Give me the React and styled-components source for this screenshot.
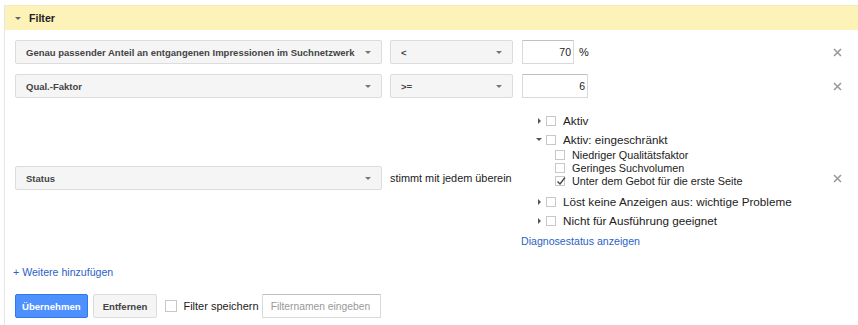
import React from "react";
import styled, { createGlobalStyle } from "styled-components";

const GlobalStyle = createGlobalStyle`
  * { box-sizing: border-box; }
  body {
    margin: 0;
    background: #fff;
    font-family: "Liberation Sans", Arial, sans-serif;
    color: #222;
  }
`;

const Panel = styled.div`
  margin: 5px 0 0 4px;
  border-left: 1px solid #e6e6e6;
  height: 320px;
`;

const Header = styled.div`
  height: 25px;
  background: #fdf3b8;
  border-top: 1px solid #f7ebbd;
  display: flex;
  align-items: center;
  gap: 8px;
  padding-left: 10px;
  font-size: 10.6px;
  font-weight: bold;
  color: #222;
`;

const Triangle = styled.span`
  width: 0;
  height: 0;
  flex: none;
  ${(p) =>
    p.$dir === "right"
      ? `border-top: 3px solid transparent; border-bottom: 3px solid transparent; border-left: 3px solid ${p.$color || "#555"};`
      : `border-left: 3px solid transparent; border-right: 3px solid transparent; border-top: 3px solid ${p.$color || "#555"};`}
`;

const Content = styled.div`
  padding: 10px 16px 0 10px;
`;

const Rows = styled.div`
  display: flex;
  flex-direction: column;
  gap: 10px;
`;

const Row = styled.div`
  display: grid;
  grid-template-columns: 367px 123px 1fr 9px;
  column-gap: 8px;
  align-items: center;
`;

const Select = styled.div`
  height: 24px;
  display: flex;
  align-items: center;
  justify-content: space-between;
  padding: 0 10px;
  background: #f5f5f5;
  border: 1px solid #dcdcdc;
  border-radius: 2px;
  font-size: 9.5px;
  font-weight: bold;
  color: #444;
`;

const ValueCell = styled.div`
  display: flex;
  align-items: center;
  gap: 5px;
  padding-left: 1px;
  font-size: 11px;
  color: #222;
`;

const NumberInput = styled.input`
  width: ${(p) => p.$width}px;
  height: 24px;
  border: 1px solid #d9d9d9;
  border-top-color: #c0c0c0;
  border-radius: 1px;
  padding: 0 2px;
  text-align: right;
  font-family: inherit;
  font-size: 10.5px;
  color: #222;
  outline: none;
`;

const MatchText = styled.span`
  font-size: 10.9px;
  color: #222;
  white-space: nowrap;
`;

const Remove = styled.button`
  width: 9px;
  height: 9px;
  padding: 0;
  border: none;
  background: none;
  display: flex;
  cursor: pointer;
`;

const Tree = styled.div`
  padding-top: 3px;
  display: flex;
  flex-direction: column;
`;

const TreeRow = styled.div`
  height: 19px;
  display: flex;
  align-items: center;
  padding-left: 15px;
  font-size: 11.7px;
  color: #222;
`;

const Toggle = styled.span`
  width: 6px;
  display: flex;
  justify-content: center;
  margin-right: 4px;
`;

const SubList = styled.div`
  margin: -1px 0 5px;
`;

const SubRow = styled.div`
  height: 13px;
  display: flex;
  align-items: center;
  padding-left: 34px;
  font-size: 10.8px;
  color: #222;
`;

const Box = styled.span`
  width: ${(p) => p.$size || 10}px;
  height: ${(p) => p.$size || 10}px;
  flex: none;
  border: 1px solid #c8c8c8;
  background: #fff;
  margin-right: ${(p) => p.$gap || 7}px;
  position: relative;
  display: inline-flex;
`;

const Tick = styled.svg`
  position: absolute;
  left: -1px;
  top: -2px;
`;

const Link = styled.a`
  font-size: 10.6px;
  color: #2b62c6;
  text-decoration: none;
  cursor: pointer;
`;

const DiagLink = styled(Link)`
  margin-top: 4px;
  line-height: 14px;
`;

const AddLink = styled(Link)`
  display: block;
  margin: 17px 0 0 -2px;
  line-height: 14px;
`;

const Footer = styled.div`
  margin-top: 15px;
  display: flex;
  align-items: center;
`;

const Button = styled.button`
  height: 24px;
  padding: 0 ${(p) => (p.$primary ? 6 : 9)}px;
  margin-right: ${(p) => (p.$primary ? 5 : 8)}px;
  border-radius: 2px;
  border: 1px solid ${(p) => (p.$primary ? "#3079ed" : "#dcdcdc")};
  background: ${(p) => (p.$primary ? "#4d90fe" : "#f5f5f5")};
  color: ${(p) => (p.$primary ? "#fff" : "#444")};
  font-family: inherit;
  font-size: 9.6px;
  font-weight: bold;
`;

const SaveLabel = styled.label`
  display: flex;
  align-items: center;
  font-size: 11px;
  color: #222;
  margin-right: 3px;
`;

const NameInput = styled.input`
  width: 119px;
  height: 24px;
  border: 1px solid #d9d9d9;
  border-top-color: #c0c0c0;
  border-radius: 1px;
  padding: 0 8px;
  font-family: inherit;
  font-size: 10.3px;
  outline: none;
  &::placeholder {
    color: #999;
  }
`;

const CloseIcon = () => (
  <svg width="9" height="9" viewBox="0 0 9 9">
    <path d="M1 1L8 8M8 1L1 8" stroke="#9a9a9a" strokeWidth="1.6" />
  </svg>
);

const Check = ({ checked }) => (
  <Box>
    {checked && (
      <Tick width="12" height="12" viewBox="0 0 12 12">
        <path d="M2.5 6.5L5 9L10 2.5" fill="none" stroke="#444" strokeWidth="1.3" />
      </Tick>
    )}
  </Box>
);

const statusTree = [
  { label: "Aktiv", open: false },
  {
    label: "Aktiv: eingeschränkt",
    open: true,
    children: [
      { label: "Niedriger Qualitätsfaktor", checked: false },
      { label: "Geringes Suchvolumen", checked: false },
      { label: "Unter dem Gebot für die erste Seite", checked: true },
    ],
  },
  { label: "Löst keine Anzeigen aus: wichtige Probleme", open: false },
  { label: "Nicht für Ausführung geeignet", open: false },
];

const App = () => {
  return (
    <>
      <GlobalStyle />
      <Panel>
        <Header>
          <Triangle $dir="down" $color="#666" />
          Filter
        </Header>
        <Content>
          <Rows>
            <Row>
              <Select>
                Genau passender Anteil an entgangenen Impressionen im Suchnetzwerk
                <Triangle $dir="down" $color="#777" />
              </Select>
              <Select>
                &lt;
                <Triangle $dir="down" $color="#777" />
              </Select>
              <ValueCell>
                <NumberInput $width={52} defaultValue="70" readOnly />
                %
              </ValueCell>
              <Remove>
                <CloseIcon />
              </Remove>
            </Row>
            <Row>
              <Select>
                Qual.-Faktor
                <Triangle $dir="down" $color="#777" />
              </Select>
              <Select>
                &gt;=
                <Triangle $dir="down" $color="#777" />
              </Select>
              <ValueCell>
                <NumberInput $width={66} defaultValue="6" readOnly />
              </ValueCell>
              <Remove>
                <CloseIcon />
              </Remove>
            </Row>
            <Row>
              <Select>
                Status
                <Triangle $dir="down" $color="#777" />
              </Select>
              <MatchText>stimmt mit jedem überein</MatchText>
              <Tree>
                {statusTree.map((item) => (
                  <React.Fragment key={item.label}>
                    <TreeRow>
                      <Toggle>
                        <Triangle $dir={item.open ? "down" : "right"} />
                      </Toggle>
                      <Check />
                      {item.label}
                    </TreeRow>
                    {item.children && (
                      <SubList>
                        {item.children.map((c) => (
                          <SubRow key={c.label}>
                            <Check checked={c.checked} />
                            {c.label}
                          </SubRow>
                        ))}
                      </SubList>
                    )}
                  </React.Fragment>
                ))}
                <DiagLink>Diagnosestatus anzeigen</DiagLink>
              </Tree>
              <Remove>
                <CloseIcon />
              </Remove>
            </Row>
          </Rows>
          <AddLink>+ Weitere hinzufügen</AddLink>
          <Footer>
            <Button $primary>Übernehmen</Button>
            <Button>Entfernen</Button>
            <SaveLabel>
              <Box $size={12} $gap={6} />
              Filter speichern
            </SaveLabel>
            <NameInput placeholder="Filternamen eingeben" />
          </Footer>
        </Content>
      </Panel>
    </>
  );
};

export default App;
